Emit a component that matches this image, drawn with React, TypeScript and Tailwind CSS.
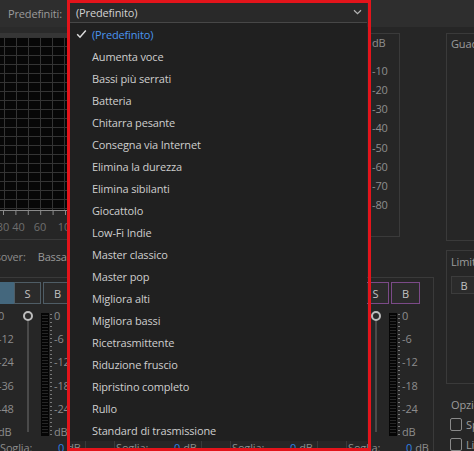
import React from "react";

const presets = [
  "(Predefinito)",
  "Aumenta voce",
  "Bassi più serrati",
  "Batteria",
  "Chitarra pesante",
  "Consegna via Internet",
  "Elimina la durezza",
  "Elimina sibilanti",
  "Giocattolo",
  "Low-Fi Indie",
  "Master classico",
  "Master pop",
  "Migliora alti",
  "Migliora bassi",
  "Ricetrasmittente",
  "Riduzione fruscio",
  "Ripristino completo",
  "Rullo",
  "Standard di trasmissione",
];

function Check() {
  return (
    <svg width="11" height="10" viewBox="0 0 11 10" className="block">
      <path d="M1.2 5.2 L4 8.2 L9.8 1.4" fill="none" stroke="#dcdcdc" strokeWidth="1.5" />
    </svg>
  );
}

function Chevron() {
  return (
    <svg width="9" height="6" viewBox="0 0 9 6" className="block">
      <path d="M1 1.2 L4.5 4.6 L8 1.2" fill="none" stroke="#b4b4b4" strokeWidth="1.2" />
    </svg>
  );
}

function Graph() {
  const v = Array.from({ length: 31 }, (_, i) => 4.5 + i * 12);
  const h = Array.from({ length: 20 }, (_, i) => 0.5 + i * 9);
  return (
    <svg width="362" height="173" className="block">
      <rect width="362" height="173" fill="#070707" />
      {v.map((x) => (
        <line key={"v" + x} x1={x} x2={x} y1={0} y2={173} stroke="#343434" strokeWidth="1" />
      ))}
      {h.map((y) => (
        <line key={"h" + y} x1={0} x2={362} y1={y} y2={y} stroke="#343434" strokeWidth="1" />
      ))}
    </svg>
  );
}

function Axis() {
  const ticks = Array.from({ length: 30 }, (_, i) => 3.5 + i * 12.4);
  const labels: [string, number][] = [
    ["30", 3],
    ["40", 18.5],
    ["60", 40],
    ["100", 67],
    ["200", 104],
    ["300", 125],
    ["500", 152],
    ["1k", 189],
    ["2k", 226],
    ["3k", 247],
    ["5k", 274],
    ["10k", 311],
    ["20k", 348],
  ];
  return (
    <svg width="362" height="27" className="block">
      <line x1="0" x2="362" y1="0.5" y2="0.5" stroke="#8a8a8a" />
      {ticks.map((x) => (
        <line key={x} x1={x} x2={x} y1={0} y2={5} stroke="#8a8a8a" />
      ))}
      {labels.map(([t, x]) => (
        <text
          key={t}
          x={x}
          y={21}
          textAnchor="middle"
          fontFamily="Open Sans, sans-serif"
          fontSize="11"
          fill="#6e6e6e"
        >
          {t}
        </text>
      ))}
    </svg>
  );
}

function MeterSvg() {
  const segs = [];
  for (let y = 2; y < 121; y += 3) {
    segs.push(<line key={"s" + y} x1="1" x2="7" y1={y + 0.5} y2={y + 0.5} stroke="#262626" />);
  }
  const ticks = [];
  for (let y = 1; y < 123; y += 4) {
    ticks.push(<line key={"t" + y} x1="9" x2="11" y1={y + 0.5} y2={y + 0.5} stroke="#7a7a7a" />);
  }
  return (
    <svg width="12" height="123" className="block">
      <rect x="0" y="0" width="8" height="123" fill="#050505" />
      {segs}
      {ticks}
    </svg>
  );
}

function Band({
  strip,
  frame,
}: {
  strip: string;
  frame: string;
}) {
  const left = ["0", "-12", "-24", "-36", "-48", "dB"];
  const right = ["0", "-6", "-12", "-18", "-24", "dB"];
  return (
    <div className="w-[88px] h-[180px] flex-none border-l border-t border-r border-[#3a3a3a]">
      <div className="mt-[4px] flex h-[22px]">
        <div className={"w-[15px] " + strip} />
        <div className={"w-[27px] border bg-[#2b2b2b] flex items-center justify-center text-[#c2c2c2] " + frame}>
          S
        </div>
        <div className="w-[2px]" />
        <div className={"w-[29px] border bg-[#2b2b2b] flex items-center justify-center text-[#c2c2c2] " + frame}>
          B
        </div>
      </div>
      <div className="mt-[6px] h-[128px] flex">
        <div className="-ml-[1px] w-[25px] h-[127px] flex flex-col justify-between text-[#8c8c8c]">
          {left.map((l) => (
            <span key={l}>{l}</span>
          ))}
        </div>
        <div className="w-[10px] flex flex-col items-center">
          <div className="mt-[1px] w-[10px] h-[10px] rounded-full border-2 border-[#bdbdbd] bg-[#2a2a2a]" />
          <div className="w-[2px] h-[111px] bg-[#4a4a4a]" />
        </div>
        <div className="ml-[8px] mt-[3px]">
          <MeterSvg />
        </div>
        <div className="ml-[1px] h-[127px] flex flex-col justify-between text-[#8c8c8c]">
          {right.map((l) => (
            <span key={l}>{l}</span>
          ))}
        </div>
      </div>
      <div className="mt-[3px] h-[12px] flex items-center">
        <span className="ml-[1px] w-[58px] text-[#8c8c8c]">Soglia:</span>
        <span className="text-[#2f7fe0]">0</span>
        <span className="ml-[3px] text-[#8c8c8c]">dB</span>
      </div>
    </div>
  );
}

export default function App() {
  const dbScale = ["-10", "-20", "-30", "-40", "-50", "-60", "-70", "-80"];
  return (
    <div className="relative w-[474px] h-[451px] overflow-hidden bg-[#262626] font-['Open_Sans',sans-serif] text-[11px] leading-[11px] tracking-[-0.15px] text-[#8c8c8c] whitespace-nowrap">
      {/* Top bar */}
      <div className="h-[27px] bg-[#2e2e2e] flex items-start">
        <div className="w-[70px] h-[23px] pl-[8px] pt-[3px] flex items-center text-[#9b9b9b]">
          Predefiniti:
        </div>
        <div className="w-[297px] h-[23px] bg-[#292929] border-b border-[#474747] flex items-center justify-between pl-[6px] pr-[5px] pt-[2px] text-[#d2d2d2]">
          <span>(Predefinito)</span>
          <Chevron />
        </div>
      </div>

      {/* Body */}
      <div className="flex">
        <div className="w-[446px] flex-none">
          <div className="h-[213px] flex">
            <div className="w-[362px] flex-none border-b border-[#3a3a3a]">
              <div className="h-[10px] bg-[#2a2a2a] border-b-[4px] border-[#363636]" />
              <Graph />
              <Axis />
            </div>
            <div className="ml-[8px] mt-[6px] w-[30px] h-[204px] border border-[#3a3a3a] pl-[1px] pt-[3px] text-[#8e8e8e]">
              <div>dB</div>
              <div className="mt-[17px] h-[145px] flex flex-col justify-between">
                {dbScale.map((d) => (
                  <span key={d}>{d}</span>
                ))}
              </div>
            </div>
          </div>

          {/* Crossover row */}
          <div className="h-[37px] flex items-center pb-[4px] text-[#8c8c8c]">
            <span className="-ml-[27px]">Crossover:</span>
            <span className="ml-[12px] text-[#9a9a9a]">Bassa</span>
            <span className="ml-[8px] text-[#2f7fe0]">120 Hz</span>
            <span className="ml-[30px] text-[#9a9a9a]">Media</span>
            <span className="ml-[8px] text-[#2f7fe0]">2000 Hz</span>
            <span className="ml-[30px] text-[#9a9a9a]">Alta</span>
            <span className="ml-[8px] text-[#2f7fe0]">10000 Hz</span>
          </div>

          {/* Bands */}
          <div className="-ml-[2px] flex gap-[28px]">
            <Band strip="bg-[#44677d]" frame="border-[#4f5d66]" />
            <Band strip="bg-[#6b7a3a]" frame="border-[#5d6a3a]" />
            <Band strip="bg-[#8a6a3a]" frame="border-[#7a5d3a]" />
            <Band strip="bg-[#7b4a88]" frame="border-[#7b4a88]" />
          </div>
        </div>

        {/* Right column */}
        <div className="w-[28px] flex-none text-[#9c9c9c]">
          <div className="mt-[6px] h-[208px] border-l border-t border-b border-[#3a3a3a] pl-[4px] pt-[4px]">
            Guadagno di uscita
          </div>
          <div className="mt-[9px] h-[134px] border-l border-t border-b border-[#3a3a3a] pl-[4px] pt-[5px]">
            <div>Limitatore</div>
            <div className="mt-[9px] w-[26px] h-[18px] border border-[#3c3c3c] bg-[#2b2b2b] flex items-center justify-center text-[#c2c2c2]">
              B
            </div>
          </div>
          <div className="mt-[15px] pl-[5px]">Opzioni</div>
          <div className="mt-[8px] pl-[4px] flex items-center gap-[4px]">
            <div className="w-[12px] h-[13px] border-[1.5px] border-[#8a8a8a] rounded-[2px] flex-none" />
            <span>Spettro su ingresso</span>
          </div>
          <div className="mt-[7px] pl-[4px] flex items-center gap-[4px]">
            <div className="w-[12px] h-[13px] border-[1.5px] border-[#8a8a8a] rounded-[2px] flex-none" />
            <span>Limitatore brickwall</span>
          </div>
        </div>
      </div>

      {/* Open preset menu */}
      <div className="absolute left-[70px] top-[23px] w-[297px] h-[418px] bg-[#202020]">
        {presets.map((p, i) => (
          <div key={p} className="h-[22px] flex items-center">
            <div className="w-[22px] flex-none pl-[6px]">{i === 0 ? <Check /> : null}</div>
            <span className={i === 0 ? "text-[#4a95ef]" : "text-[#cecece]"}>{p}</span>
          </div>
        ))}
      </div>

      {/* Red highlight */}
      <div className="absolute left-[67px] top-0 w-[304px] h-[451px] border-[3px] border-[#e3141b] pointer-events-none" />
    </div>
  );
}
